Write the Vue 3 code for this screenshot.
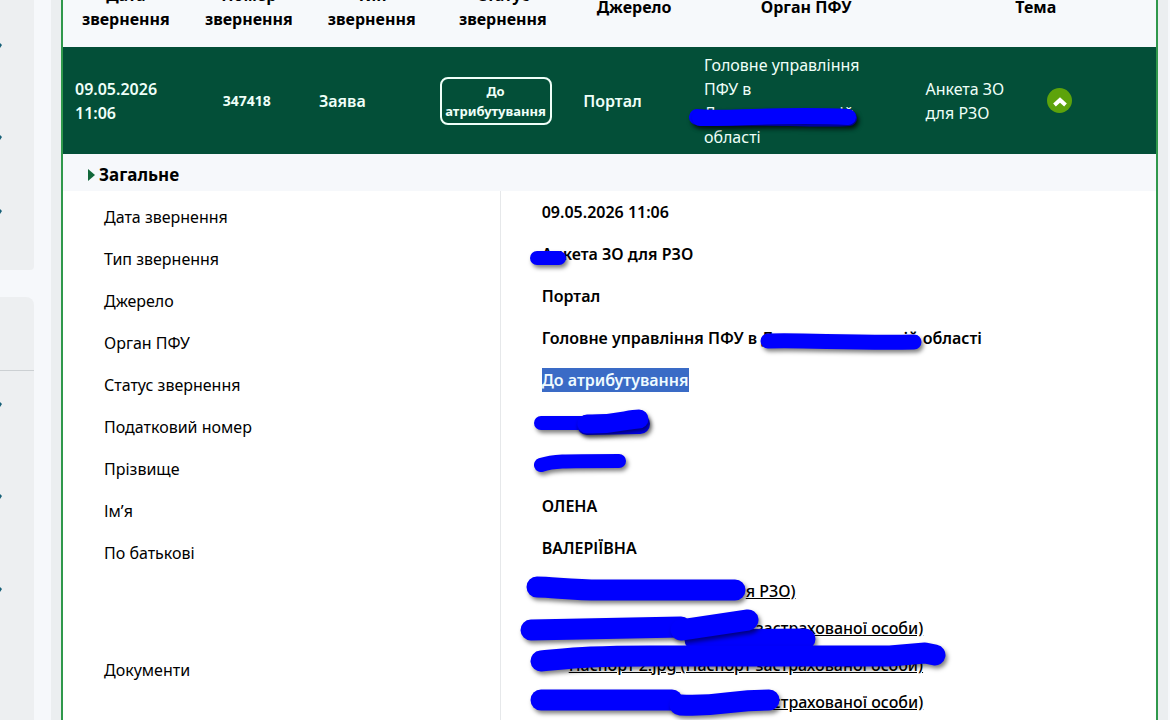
<script setup>
const details = [
  { label: 'Дата звернення', value: '09.05.2026 11:06' },
  { label: 'Тип звернення', value: 'Анкета ЗО для РЗО' },
  { label: 'Джерело', value: 'Портал' },
  { label: 'Орган ПФУ', value: 'Головне управління ПФУ в', region: true },
  { label: 'Статус звернення', value: 'До атрибутування', selected: true },
  { label: 'Податковий номер', value: '' },
  { label: 'Прізвище', value: '' },
  { label: 'Ім’я', value: 'ОЛЕНА' },
  { label: 'По батькові', value: 'ВАЛЕРІЇВНА' },
]
</script>

<template>
  <div class="page">
    <aside class="side">
      <div class="side-panel first">
        <svg class="ticks" width="3" height="270" viewBox="0 0 3 270" aria-hidden="true">
          <path d="M0 43l2 2-2 3zM0 135l2 2-2 3zM0 209l2 2-2 3z" />
        </svg>
      </div>
      <div class="side-panel second">
        <div class="side-title"></div>
        <svg class="ticks" width="3" height="340" viewBox="0 0 3 340" aria-hidden="true">
          <path d="M0 31l2 2-2 3zM0 123l2 2-2 3zM0 216l2 2-2 3z" />
        </svg>
      </div>
    </aside>

    <main class="card">
      <div class="panel">
        <table class="appeals">
          <colgroup>
            <col class="w-date" /><col class="w-num" /><col class="w-type" /><col class="w-status" />
            <col class="w-source" /><col class="w-body" /><col class="w-topic" /><col />
          </colgroup>
          <thead>
            <tr>
              <th>Дата звернення</th>
              <th>Номер звернення</th>
              <th>Тип звернення</th>
              <th>Статус звернення</th>
              <th>Джерело</th>
              <th>Орган ПФУ</th>
              <th colspan="2">Тема</th>
            </tr>
          </thead>
          <tbody>
            <tr>
              <td class="medium">09.05.2026 11:06</td>
              <td class="number">347418</td>
              <td class="medium">Заява</td>
              <td class="status"><span class="badge">До атрибутування</span></td>
              <td class="medium">Портал</td>
              <td class="office">Головне управління ПФУ в <span class="region">Д<i></i>ій</span> області</td>
              <td>Анкета ЗО для РЗО</td>
              <td class="toggle-cell">
                <button class="toggle" type="button" aria-label="Згорнути">
                  <svg width="25" height="25" viewBox="0 0 25 25" aria-hidden="true">
                    <path d="M7.5 17 L13 12 L18.5 17" />
                  </svg>
                </button>
              </td>
            </tr>
          </tbody>
        </table>

        <button class="section" type="button">
          <svg width="7" height="12" viewBox="0 0 7 12" aria-hidden="true"><path d="M0 0L7 6L0 12Z" /></svg>
          Загальне
        </button>

        <table class="details">
          <tbody>
            <tr v-for="row in details" :key="row.label">
              <th scope="row">{{ row.label }}</th>
              <td>
                <span :class="{ selected: row.selected }">{{ row.value }}</span>
                <template v-if="row.region"><span class="region"> Д<i></i>ій</span> області</template>
              </td>
            </tr>
            <tr class="documents">
              <th scope="row">Документи</th>
              <td>
                <a href="#"><i class="gap-a"></i>я РЗО)</a>
                <a href="#"><i class="gap-b"></i>застрахованої особи)</a>
                <a href="#"><i class="gap-c"></i>Паспорт 2.jpg (Паспорт застрахованої особи)</a>
                <a href="#"><i class="gap-b"></i>застрахованої особи)</a>
              </td>
            </tr>
          </tbody>
        </table>
      </div>
    </main>

    <svg class="marker" width="1170" height="720" viewBox="0 0 1170 720" aria-hidden="true">
      <g class="thin">
        <path d="M697 117 C725 119 750 117 790 118 S835 119 849 118" stroke-width="16" />
        <path d="M700 118 C750 118 790 114 848 117" stroke-width="16" />
        <path d="M537 258H559" />
        <path d="M768 341 C810 340 845 343 914 342" stroke-width="15" />
        <path d="M541 423H584" />
        <path d="M587 425 L640 424" stroke-width="20" />
        <path d="M587 424 C617 425 627 419 639 419" stroke-width="19" />
        <path d="M541 465 C553 461 560 461 619 461" />
      </g>
      <g class="thick">
        <path d="M537 587 C552 587 572 590 600 590H735" />
        <path d="M531 630 L681 627" />
        <path d="M695 640 L805 639" />
        <path d="M681 630 L748 620" />
        <path d="M541 661 C575 658 590 656 650 656H890 L925 653 L935 655" />
        <path d="M541 700H672" />
        <path d="M680 705 C725 707 724 700 769 700" />
      </g>
    </svg>
  </div>
</template>

<style>
body {
  background: #f6f8fb;
}
</style>

<style scoped>
.page {
  position: relative;
  display: flex;
  gap: 17px;
  height: 100vh;
  padding-right: 2px;
  box-sizing: border-box;
  overflow: hidden;
  font: 16px/24px "Noto Sans", "Open Sans", sans-serif;
  color: #000;
}
.side {
  flex: 0 0 34px;
  display: flex;
  flex-direction: column;
  gap: 27px;
}
.side-panel {
  background: #edeff1;
}
.first {
  height: 270px;
  border-radius: 0 0 4px 0;
}
.second {
  flex: 1;
  border-radius: 0 8px 0 0;
}
.side-title {
  height: 73px;
  border-bottom: 1px solid #ccd0d3;
}
.ticks {
  display: block;
  fill: #176078;
}
.card {
  flex: 1;
  min-width: 0;
  padding: 0 10px;
  background: #ebeef0;
}
.panel {
  min-height: 100vh;
  background: #fff;
  border: solid #2f984b;
  border-width: 0 2px;
}
table {
  width: 100%;
  border-collapse: collapse;
}
.appeals {
  table-layout: fixed;
  margin-top: -34px;
}
.w-date, .w-type, .w-source { width: 11.5%; }
.w-num { width: 11%; }
.w-status { width: 12.5%; }
.w-body { width: 20%; }
.w-topic { width: 11%; }
.appeals th {
  height: 81px;
  padding: 0 12px;
  background: #f6f9fb;
  font-weight: 700;
}
.appeals td {
  height: 107px;
  padding: 0 0 0 12px;
  background: #034f38;
  color: #effff8;
}
.appeals .medium {
  font-weight: 600;
}
.appeals .number {
  padding: 0 4px 0 0;
  text-align: center;
  font-size: 14px;
  font-weight: 700;
}
.appeals .status {
  padding-left: 5px;
}
.appeals .office {
  padding-left: 7px;
  padding-right: 44px;
}
.appeals td:nth-child(3),
.appeals td:nth-child(7) {
  padding-left: 10px;
}
.badge {
  display: block;
  box-sizing: border-box;
  width: 112px;
  padding: 2px 0;
  border: 2px solid #effff8;
  border-radius: 8px;
  text-align: center;
  font-size: 13px;
  font-weight: 700;
  line-height: 20px;
}
.region {
  white-space: nowrap;
}
.region i {
  display: inline-block;
  width: 124px;
}
.details .region i {
  width: 130px;
}
.appeals .toggle-cell {
  padding-left: 11px;
}
.toggle {
  display: block;
  width: 25px;
  height: 25px;
  padding: 0;
  border: 0;
  border-radius: 50%;
  background: #5da30b;
}
.toggle svg {
  display: block;
}
.toggle path {
  fill: none;
  stroke: #fff;
  stroke-width: 4;
}
.section {
  display: flex;
  align-items: center;
  gap: 4px;
  width: 100%;
  height: 37px;
  padding: 5px 0 0 25px;
  border: 0;
  background: #f6f8fb;
  color: #000;
  font: 700 17px/24px "Noto Sans", "Open Sans", sans-serif;
}
.section svg {
  fill: #12683b;
}
.details th,
.details td {
  height: 42px;
  box-sizing: border-box;
  padding: 0 0 0 41px;
  text-align: left;
}
.details th {
  width: 40%;
  padding-top: 9px;
  border-right: 1px solid #e6e8ea;
  font-weight: 400;
}
.details td {
  font-weight: 600;
}
.selected {
  display: inline-block;
  background: #3a6bc6;
  color: #effbff;
}
.details .documents td {
  padding-top: 4px;
  padding-bottom: 40px;
  font-weight: 500;
}
.documents a {
  display: block;
  width: max-content;
  line-height: 37px;
  color: #000;
  text-decoration: underline;
}
.documents i {
  display: inline-block;
}
.gap-a { width: 204px; }
.gap-b { width: 214px; }
.gap-c { width: 27px; }
.marker {
  position: absolute;
  top: 0;
  left: 0;
  pointer-events: none;
}
.marker path {
  fill: none;
  stroke: #0000fe;
  stroke-linecap: round;
  stroke-linejoin: round;
  filter: drop-shadow(2px 3px 2px rgba(0, 0, 0, 0.5));
}
.marker .thin path:not([stroke-width]) { stroke-width: 14; }
.marker .thick path { stroke-width: 21; }
</style>
